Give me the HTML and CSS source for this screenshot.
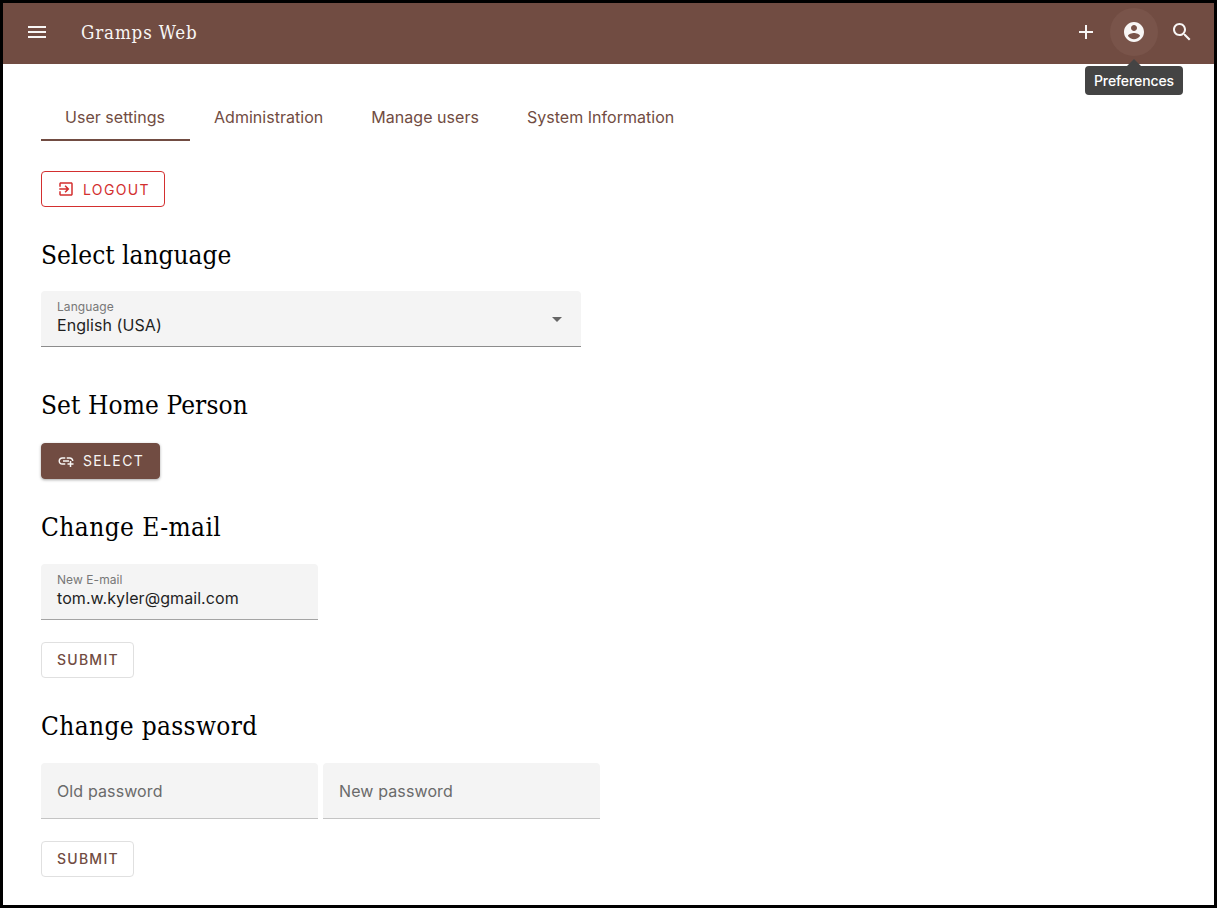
FILE: index.html
```
<!DOCTYPE html>
<html lang="en">
<head>
<meta charset="utf-8">
<title>Gramps Web</title>
<link rel="stylesheet" href="styles.css">
</head>
<body>
<div class="app">
  <header class="bar">
    <button class="icon-btn" aria-label="Menu"><svg viewBox="0 0 24 24"><path d="M3 18h18v-2H3v2zm0-5h18v-2H3v2zm0-7v2h18V6H3z"/></svg></button>
    <span class="brand">Gramps Web</span>
    <div class="actions">
      <button class="icon-btn" aria-label="Add"><svg viewBox="0 0 24 24"><path d="M19 13h-6v6h-2v-6H5v-2h6V5h2v6h6v2z"/></svg></button>
      <div class="anchor">
        <button class="icon-btn hovered" aria-label="Account"><svg viewBox="0 0 24 24"><path d="M12 2C6.48 2 2 6.48 2 12s4.48 10 10 10 10-4.48 10-10S17.52 2 12 2zm0 3c1.66 0 3 1.34 3 3s-1.34 3-3 3-3-1.34-3-3 1.34-3 3-3zm0 14.2c-2.5 0-4.71-1.28-6-3.22.03-1.99 4-3.08 6-3.08 1.99 0 5.97 1.09 6 3.08-1.29 1.94-3.5 3.22-6 3.22z"/></svg></button>
        <div class="tooltip">Preferences</div>
      </div>
      <button class="icon-btn" aria-label="Search"><svg viewBox="0 0 24 24"><path d="M15.5 14h-.79l-.28-.27C15.41 12.59 16 11.11 16 9.5 16 5.91 13.09 3 9.5 3S3 5.91 3 9.5 5.91 16 9.5 16c1.61 0 3.09-.59 4.23-1.57l.27.28v.79l5 4.99L20.49 19l-4.99-5zm-6 0C7.01 14 5 11.99 5 9.5S7.01 5 9.5 5 14 7.01 14 9.5 11.99 14 9.5 14z"/></svg></button>
    </div>
  </header>
  <main class="content">
    <nav class="tabs">
      <a class="tab active">User settings</a>
      <a class="tab">Administration</a>
      <a class="tab">Manage users</a>
      <a class="tab">System Information</a>
    </nav>
    <button class="btn danger"><svg viewBox="0 0 24 24"><path d="M10.09 15.59L11.5 17l5-5-5-5-1.41 1.41L12.67 11H3v2h9.67l-2.58 2.59zM19 3H5c-1.11 0-2 .9-2 2v4h2V5h14v14H5v-4H3v4c0 1.1.89 2 2 2h14c1.1 0 2-.9 2-2V5c0-1.1-.9-2-2-2z"/></svg>Logout</button>

    <section class="language">
      <h3>Select language</h3>
      <div class="field wide selected">
        <div class="texts"><span class="label">Language</span><span class="value">English (USA)</span></div>
        <svg class="caret" viewBox="0 0 10 5"><path d="M0 0h10L5 5z"/></svg>
      </div>
    </section>

    <section class="home">
      <h3>Set Home Person</h3>
      <button class="btn raised"><svg viewBox="0 0 24 24"><path d="M8 11h8v2H8zm12.1 1H22c0-2.76-2.24-5-5-5h-4v1.9h4c1.71 0 3.1 1.39 3.1 3.1zM3.9 12c0-1.71 1.39-3.1 3.1-3.1h4V7H7c-2.76 0-5 2.24-5 5s2.24 5 5 5h4v-1.9H7c-1.71 0-3.1-1.39-3.1-3.1zM19 12h-2v3h-3v2h3v3h2v-3h3v-2h-3z"/></svg><span class="lifted">Select</span></button>
    </section>

    <section class="email">
      <h3>Change E-mail</h3>
      <div class="field filled">
        <div class="texts"><span class="label">New E-mail</span><span class="value">tom.w.kyler@gmail.com</span></div>
      </div>
      <button class="btn outlined"><span class="lifted">Submit</span></button>
    </section>

    <section class="password">
      <h3>Change password</h3>
      <div class="row">
        <div class="field"><span class="placeholder">Old password</span></div>
        <div class="field"><span class="placeholder">New password</span></div>
      </div>
      <button class="btn outlined"><span class="lifted">Submit</span></button>
    </section>
  </main>
</div>
</body>
</html>
```
FILE: styles.css
```
* { box-sizing: border-box; }
body { margin: 0; background: #fff; font-family: Inter, sans-serif; font-weight: 400; color: #1f1f1f; }
button { font: inherit; margin: 0; cursor: pointer; }
svg { display: block; flex: none; fill: currentColor; }
.app { height: 908px; border: 3px solid #000; overflow: hidden; }

.bar { display: flex; align-items: flex-start; height: 61px; padding: 5px 8px 0 10px; background: #714c42; color: #f8f6f5; }
.icon-btn { display: grid; place-items: center; width: 48px; height: 48px; padding: 0; border: 0; border-radius: 50%; background: none; color: inherit; }
.icon-btn svg { width: 24px; height: 24px; }
.hovered { background: #79544a; }
.brand { margin-left: 20px; font: 18.6px/50px "Roboto Slab", "DejaVu Serif Condensed", "DejaVu Serif", serif; letter-spacing: 0.85px; }
.actions { display: flex; margin-left: auto; }
.anchor { position: relative; }
.tooltip { position: absolute; top: 58px; left: 50%; transform: translateX(-50%); width: 98px; text-align: center; border-radius: 4px; background: #444; color: #fff; font-size: 14px; font-weight: 500; line-height: 29px; letter-spacing: -0.1px; }
.tooltip::before { content: ""; position: absolute; top: -7px; left: 50%; margin-left: -7px; border: 7px solid transparent; border-top: 0; border-bottom-color: #444; }

.content { padding: 29px 38px 0; }
.tabs { display: flex; height: 48px; margin-bottom: 30px; }
.tab { padding: 0 24px; border-bottom: 2px solid transparent; color: #714c42; font-size: 16px; font-weight: 380; line-height: 49px; letter-spacing: 0.03px; white-space: nowrap; }
.tab.active { width: 149px; border-color: #714c42; }

.btn { display: flex; align-items: center; height: 36px; padding: 0 0 0 15px; border: 1px solid; border-radius: 4px; background: none; font-size: 14px; font-weight: 420; letter-spacing: 1.35px; text-transform: uppercase; }
.btn svg { width: 18px; height: 18px; margin-right: 8px; }
.lifted { padding-bottom: 2px; }
.danger { width: 124px; border-color: #d32f2f; color: #d32f2f; }
.raised { width: 119px; border-color: #714c42; background: #714c42; color: #f8f6f5; box-shadow: 0 1px 3px rgba(0, 0, 0, .35); }
.outlined { width: 93px; margin-top: 22px; border-color: #e0e0e0; color: #714c42; font-weight: 480; letter-spacing: 1.25px; }

h3 { margin: 30px 0 19px; color: #000; font: 400 26px/36px "Roboto Slab", "DejaVu Serif Condensed", "DejaVu Serif", serif; }
.language h3 { margin-bottom: 18px; }
.home h3 { margin: 40px 0 20px; letter-spacing: 0.1px; }
.email h3 { letter-spacing: 0.42px; }
.password h3 { letter-spacing: 0.35px; }

.field { display: flex; align-items: center; justify-content: space-between; width: 277px; height: 56px; padding: 0 16px; border-bottom: 1px solid #c4c4c4; border-radius: 4px 4px 0 0; background: #f4f4f4; font-size: 16px; letter-spacing: 0.07px; }
.wide { width: 540px; padding-right: 19px; }
.selected { border-color: #8c8c8c; }
.filled { border-color: #a4a4a4; }
.texts { display: flex; flex-direction: column; padding-bottom: 2px; }
.label { color: #777; font-size: 12px; line-height: 15px; }
.value { color: #1f1f1f; line-height: 22px; }
.placeholder { color: #6a6a6a; letter-spacing: 0.12px; }
.caret { width: 10px; height: 5px; margin-top: 2px; color: #666; }
.row { display: flex; gap: 5px; }
```
